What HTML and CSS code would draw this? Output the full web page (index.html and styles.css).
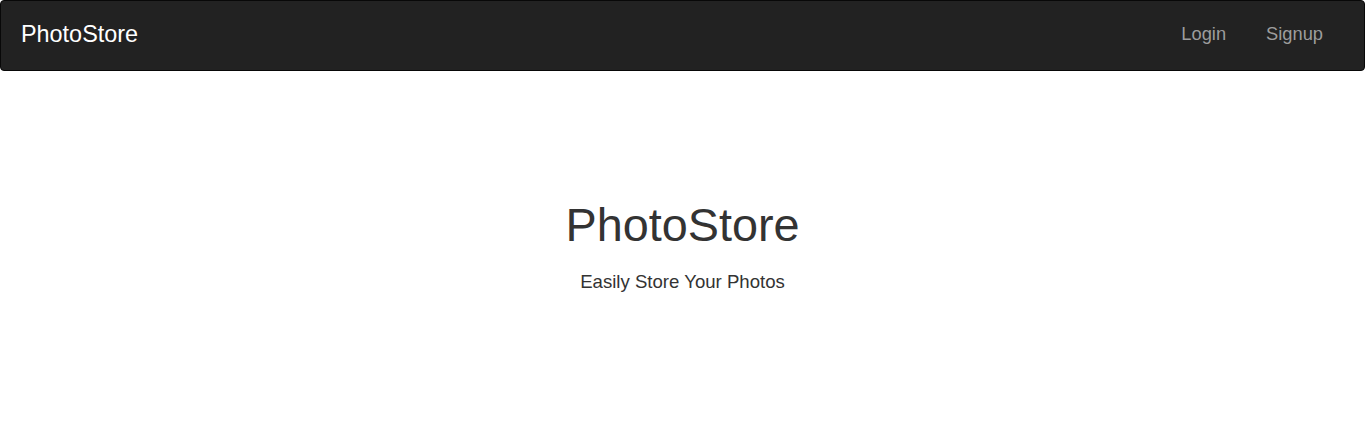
FILE: index.html
```html
<!DOCTYPE html>
<html>
<head>
<meta charset="utf-8">
<link rel="stylesheet" href="styles.css">
</head>
<body>
<nav class="navbar">
  <a class="brand" href="#">PhotoStore</a>
  <ul class="nav-links">
    <li><a href="#">Login</a></li>
    <li><a href="#">Signup</a></li>
  </ul>
</nav>
<main class="hero">
  <h1 class="hero-title">PhotoStore</h1>
  <p class="hero-sub">Easily Store Your Photos</p>
</main>
</body>
</html>
```
FILE: styles.css
```css
* { box-sizing: border-box; }
html, body { margin: 0; padding: 0; background: #fff; }
body {
  font-family: "Liberation Sans", Arial, sans-serif;
  font-size: 18px;
  color: #333;
}
.navbar {
  display: flex;
  align-items: center;
  justify-content: space-between;
  height: 71px;
  background: #222;
  border: 1px solid #080808;
  border-radius: 4px;
  padding: 0 21px 2px 20px;
}
.brand {
  color: #fff;
  font-size: 23.4px;
  text-decoration: none;
  line-height: 1;
}
.nav-links {
  list-style: none;
  margin: 0;
  padding: 0;
  display: flex;
}
.nav-links a {
  display: block;
  padding: 0 20px;
  color: #9d9d9d;
  text-decoration: none;
  font-size: 18.3px;
  line-height: 1;
}
.hero {
  text-align: center;
  padding-top: 129px;
}
.hero-title {
  margin: 0;
  font-size: 46.8px;
  font-weight: 400;
  line-height: 1.1;
  color: #333;
}
.hero-sub {
  margin: 18px 0 0;
  font-size: 18.6px;
  line-height: 1.4;
}
```
